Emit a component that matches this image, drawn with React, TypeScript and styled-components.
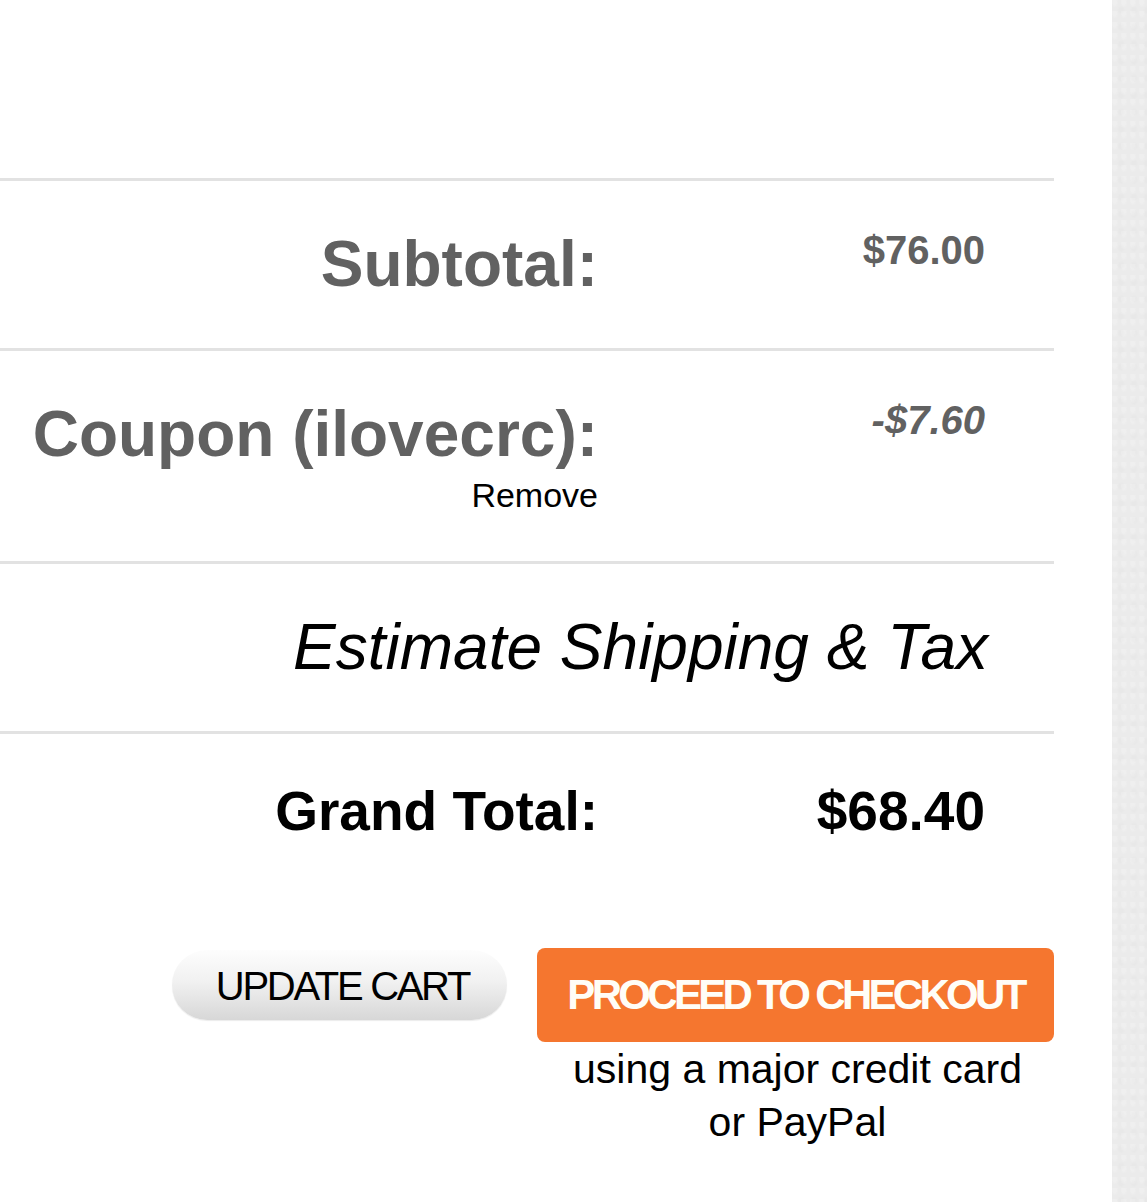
import React from "react";
import styled, { createGlobalStyle } from "styled-components";

const GlobalStyle = createGlobalStyle`
  html, body {
    margin: 0;
    padding: 0;
    background: #ffffff;
  }
  body {
    font-family: "Liberation Sans", Arial, Helvetica, sans-serif;
    -webkit-font-smoothing: antialiased;
  }
`;

const Page = styled.div`
  display: flex;
  width: 1147px;
  min-height: 1202px;
`;

const Main = styled.main`
  width: 1112px;
  background: #ffffff;
  padding-top: 178px;
  box-sizing: border-box;
`;

const Sidebar = styled.aside`
  flex: 1;
  background-color: #ebebeb;
  background-image:
    radial-gradient(ellipse at 30% 20%, rgba(255, 255, 255, 0.18) 0 2px, transparent 4px),
    radial-gradient(ellipse at 70% 60%, rgba(0, 0, 0, 0.012) 0 2px, transparent 4px);
  background-size: 9px 11px, 13px 17px;
`;

const Totals = styled.section`
  width: 1054px;
`;

const Row = styled.div`
  display: grid;
  grid-template-columns: 598px 1fr;
  align-items: start;
  border-top: 3px solid #e2e2e2;
  padding: 46px 0 47px;
`;

const FinalRow = styled(Row)`
  padding-bottom: 0;
`;

const LabelCell = styled.div`
  display: flex;
  flex-direction: column;
  align-items: flex-end;
`;

const Label = styled.div<{ $tone?: "muted" | "strong" }>`
  font-weight: 700;
  font-size: ${(p) => (p.$tone === "strong" ? "55px" : "64px")};
  line-height: ${(p) => (p.$tone === "strong" ? "62px" : "74px")};
  color: ${(p) => (p.$tone === "strong" ? "#000000" : "#616161")};
  white-space: nowrap;
`;

const RemoveLink = styled.a`
  margin-top: 5px;
  font-size: 34px;
  line-height: 38px;
  color: #000000;
  text-decoration: none;
  cursor: pointer;
`;

const Value = styled.div<{ $tone?: "muted" | "discount" | "strong" }>`
  text-align: right;
  padding-right: 69px;
  font-weight: 700;
  font-style: ${(p) => (p.$tone === "discount" ? "italic" : "normal")};
  font-size: ${(p) => (p.$tone === "strong" ? "55px" : "40px")};
  line-height: ${(p) => (p.$tone === "strong" ? "62px" : "46px")};
  color: ${(p) => (p.$tone === "strong" ? "#000000" : "#616161")};
`;

const EstimateRow = styled.div`
  border-top: 3px solid #e2e2e2;
  padding: 46px 66px 47px 0;
  text-align: right;
`;

const EstimateLink = styled.a`
  font-style: italic;
  font-size: 64px;
  line-height: 74px;
  color: #000000;
  text-decoration: none;
  cursor: pointer;
`;

const Actions = styled.div`
  display: flex;
  justify-content: flex-end;
  align-items: flex-start;
  gap: 30px;
  margin-top: 106px;
`;

const UpdateButton = styled.button`
  width: 335px;
  height: 70px;
  margin-top: 2px;
  border: none;
  border-radius: 35px;
  background: linear-gradient(to bottom, #fdfdfd 0%, #f1f1f1 45%, #d7d7d7 100%);
  box-shadow: 0 1px 1px rgba(0, 0, 0, 0.08);
  font-family: "Liberation Sans", Arial, sans-serif;
  font-size: 40px;
  letter-spacing: -2.3px;
  color: #000000;
  padding: 3px 0 0 6px;
  cursor: pointer;
`;

const CheckoutColumn = styled.div`
  width: 517px;
  display: flex;
  flex-direction: column;
  align-items: stretch;
`;

const CheckoutButton = styled.button`
  height: 94px;
  border: none;
  border-radius: 8px;
  background: #f5762f;
  color: #fffdf7;
  font-family: "Liberation Sans", Arial, sans-serif;
  font-weight: 700;
  font-size: 42px;
  letter-spacing: -3.7px;
  padding: 0;
  cursor: pointer;
`;

const CheckoutNote = styled.p`
  margin: 1px 0 0;
  text-align: center;
  font-size: 41px;
  line-height: 53px;
  color: #000000;
  padding-left: 4px;
`;

export default function App() {
  return (
    <>
      <GlobalStyle />
      <Page>
        <Main>
          <Totals>
            <Row>
              <LabelCell>
                <Label>Subtotal:</Label>
              </LabelCell>
              <Value>$76.00</Value>
            </Row>
            <Row>
              <LabelCell>
                <Label>Coupon (ilovecrc):</Label>
                <RemoveLink>Remove</RemoveLink>
              </LabelCell>
              <Value $tone="discount">-$7.60</Value>
            </Row>
            <EstimateRow>
              <EstimateLink>Estimate Shipping &amp; Tax</EstimateLink>
            </EstimateRow>
            <FinalRow>
              <LabelCell>
                <Label $tone="strong">Grand Total:</Label>
              </LabelCell>
              <Value $tone="strong">$68.40</Value>
            </FinalRow>
            <Actions>
              <UpdateButton>UPDATE CART</UpdateButton>
              <CheckoutColumn>
                <CheckoutButton>PROCEED TO CHECKOUT</CheckoutButton>
                <CheckoutNote>
                  using a major credit card
                  <br />
                  or PayPal
                </CheckoutNote>
              </CheckoutColumn>
            </Actions>
          </Totals>
        </Main>
        <Sidebar />
      </Page>
    </>
  );
}
